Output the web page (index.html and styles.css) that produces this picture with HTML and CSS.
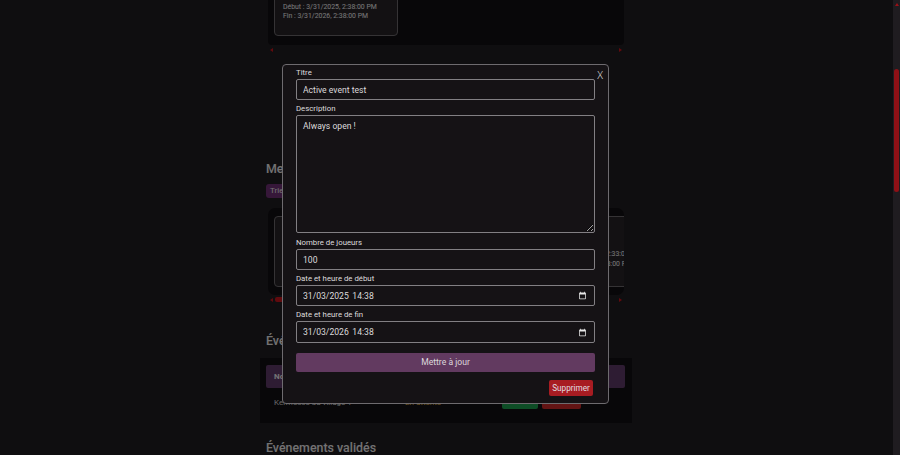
FILE: index.html
```html
<!DOCTYPE html>
<html lang="fr">
<head>
<meta charset="utf-8">
<title>Événements</title>
<link rel="stylesheet" href="styles.css">
</head>
<body>
<div class="page">
  <main class="content">
    <section class="carousel first">
      <div class="event-card">
        <p class="muted">Joueurs : 100</p>
        <p>Début : 3/31/2025, 2:38:00 PM</p>
        <p>Fin : 3/31/2026, 2:38:00 PM</p>
      </div>
    </section>
    <div class="scroller">
      <span class="arrow-left"></span>
      <span class="arrow-right"></span>
    </div>

    <h2 class="heading mod">Mes événements</h2>
    <span class="tag">Trier</span>
    <section class="carousel second">
      <div class="event-card tall">
        <p>Joueurs : 100</p>
        <p>Début : 3/31/2025, 2:33:00 PM</p>
        <p>Fin : 3/31/2026, 2:33:00 PM</p>
      </div>
      <div class="event-card tall">
        <p>Joueurs : 100</p>
        <p>Début : 3/31/2025, 2:33:00 PM</p>
        <p>Fin : 3/31/2026, 2:33:00 PM</p>
      </div>
      <div class="event-card tall">
        <p>Début : 3/31/2025, 2:33:00 PM</p>
        <p>Fin : 3/31/2026, 2:33:00 PM</p>
      </div>
    </section>
    <div class="scroller">
      <span class="arrow-left"></span>
      <span class="thumb"></span>
      <span class="arrow-right"></span>
    </div>

    <h2 class="heading ev">Événements en attente</h2>
    <section class="table-wrap">
      <div class="table-head"><span>Nom</span></div>
      <div class="table-row">
        <span class="col-name">Kermesse du village 1</span>
        <span class="col-status">En attente</span>
        <span class="col-actions">
          <span class="pill green">Valider</span>
          <span class="pill red">Refuser</span>
        </span>
      </div>
    </section>

    <h2 class="heading val">Événements validés</h2>
  </main>
  <aside class="scrollbar">
    <span class="scroll-up"></span>
    <span class="scroll-thumb"></span>
  </aside>
</div>

<div class="overlay">
  <form class="modal">
    <button type="button" class="close">X</button>
    <label class="field-label first-label" for="titre">Titre</label>
    <input class="field" id="titre" type="text" value="Active event test">
    <label class="field-label tight" for="desc">Description</label>
    <textarea class="field area" id="desc">Always open !</textarea>
    <label class="field-label" for="nb">Nombre de joueurs</label>
    <input class="field" id="nb" type="text" value="100">
    <label class="field-label tight" for="debut">Date et heure de début</label>
    <div class="date-field">
      <input class="date-text" id="debut" type="text" value="31/03/2025 14:38">
      <svg class="cal" viewBox="0 0 24 24" width="9" height="9"><path fill="#e8e8e8" d="M19 4h-1V2h-2v2H8V2H6v2H5a2 2 0 0 0-2 2v14a2 2 0 0 0 2 2h14a2 2 0 0 0 2-2V6a2 2 0 0 0-2-2zm0 16H5V9h14z"/></svg>
    </div>
    <label class="field-label tight" for="fin">Date et heure de fin</label>
    <div class="date-field">
      <input class="date-text" id="fin" type="text" value="31/03/2026 14:38">
      <svg class="cal" viewBox="0 0 24 24" width="9" height="9"><path fill="#e8e8e8" d="M19 4h-1V2h-2v2H8V2H6v2H5a2 2 0 0 0-2 2v14a2 2 0 0 0 2 2h14a2 2 0 0 0 2-2V6a2 2 0 0 0-2-2zm0 16H5V9h14z"/></svg>
    </div>
    <button type="button" class="submit">Mettre à jour</button>
    <div class="danger-row"><button type="button" class="delete">Supprimer</button></div>
  </form>
</div>
</body>
</html>
```
FILE: styles.css
```css
* { box-sizing: border-box; }
html, body { margin: 0; height: 100%; overflow: hidden; }
body {
  background: #1f1c20;
  font-family: Roboto, "Noto Sans", sans-serif;
  color: #e8e6e8;
}
p { margin: 0; }

.page { display: flex; height: 455px; overflow: hidden; }
.content {
  flex: 1;
  padding: 0 268px 0 266px;
  margin-top: -8px;
  min-width: 0;
}
.scrollbar {
  width: 7px;
  background: #1f1c20;
  padding-top: 3px;
  display: flex;
  flex-direction: column;
  align-items: center;
}
.scroll-up {
  width: 0; height: 0;
  border-left: 2.5px solid transparent;
  border-right: 2.5px solid transparent;
  border-bottom: 3px solid #9a1017;
}
.scroll-thumb {
  width: 5px;
  height: 123px;
  margin-top: 63px;
  background: #8f1016;
  border-radius: 3px;
}

.carousel {
  background: #100e12;
  margin: 0 1px 0 2px;
  padding: 8px 6px;
  display: flex;
  gap: 8px;
  overflow: hidden;
  border-radius: 4px;
}
.carousel.first { height: 53px; padding-top: 0; }
.carousel.second { height: 87px; margin-top: 10px; border-radius: 7px; }
.event-card {
  width: 124px;
  flex: none;
  border: 1px solid #6a676b;
  border-radius: 4px;
  background: #262327;
  padding: 0 8px;
  font-size: 6.9px;
  line-height: 9.6px;
  color: #f0eef0;
  white-space: nowrap;
}
.carousel.first .event-card { height: 44px; }
.event-card.tall { height: 71px; padding-top: 33px; }
.muted { color: #8a868b; }

.scroller {
  height: 9px;
  margin: 0 1px 0 2px;
  display: flex;
  align-items: center;
  justify-content: space-between;
  padding: 0 2px;
}
.arrow-left, .arrow-right {
  width: 0; height: 0;
  border-top: 2.5px solid transparent;
  border-bottom: 2.5px solid transparent;
}
.arrow-left { border-right: 3px solid #c2141c; }
.arrow-right { border-left: 3px solid #c2141c; }
.thumb {
  width: 18px; height: 5px;
  margin-left: 2px; margin-right: auto;
  background: #c2141c; border-radius: 2px;
}

.heading {
  margin: 0;
  font-size: 12.4px;
  font-weight: 500;
  line-height: 15px;
  color: #e6e4e6;
  white-space: nowrap;
}
.heading.mod { margin-top: 107px; }
.heading.ev { margin-top: 29px; }
.heading.val { margin-top: 17px; }

.tag {
  display: inline-block;
  margin-top: 8px;
  height: 14px;
  padding: 0 16px 0 4px;
  border-radius: 3px;
  background: #6c2f73;
  font-size: 8px;
  line-height: 14px;
  vertical-align: top;
}

.table-wrap {
  margin: 10px -7px 0 -6px;
  padding: 7px 7px 7px 6px;
  height: 65px;
  background: #100e12;
}
.table-head {
  height: 23px;
  background: #5d3866;
  padding: 0 8px;
  font-size: 8px;
  font-weight: 700;
  line-height: 23px;
  border-radius: 2px;
}
.table-row {
  display: flex;
  align-items: center;
  height: 28px;
  padding: 0 8px;
  font-size: 8px;
}
.col-name { width: 131px; color: #ccc; }
.col-status { width: 97px; color: #d9a441; }
.col-actions { display: flex; gap: 4px; }
.pill {
  height: 14px;
  padding: 0 6px;
  line-height: 14px;
  border-radius: 2px;
  color: #fff;
  text-align: center;
}
.pill.green { background: #1c9a4c; width: 36px; }
.pill.red { background: #c62828; width: 39px; }

.overlay {
  position: fixed;
  inset: 0 7px 0 0;
  background: rgba(0, 0, 0, 0.5);
}
.modal {
  position: absolute;
  left: 282px;
  top: 63.5px;
  width: 327px;
  height: 340px;
  padding: 3px 13px 0;
  background: #151215;
  border: 1px solid #6e6b6f;
  border-radius: 4px;
  display: flex;
  flex-direction: column;
}
.close {
  position: absolute;
  top: 4px;
  right: 5px;
  padding: 0;
  background: none;
  border: 0;
  color: #dedcde;
  font: 300 10.5px/12px "Noto Sans", sans-serif;
}
.field-label {
  font-size: 7.8px;
  line-height: 9px;
  height: 11px;
  margin-top: 5px;
  color: #dedcde;
  font-weight: 400;
}
.field-label.tight { margin-top: 4px; }
.first-label { margin-top: 0; }
.field, .date-text {
  font-family: Roboto, sans-serif;
  font-size: 8.6px;
  color: #dcdadc;
}
.field {
  display: block;
  width: 100%;
  flex: none;
  height: 21px;
  padding: 1px 6px 0;
  background: #151215;
  border: 1px solid #827f83;
  border-radius: 2px;
  outline: 0;
}
.area {
  height: 118px;
  padding: 5px 6px;
  line-height: 11px;
  resize: vertical;
  color-scheme: dark;
}
.date-field {
  display: flex;
  flex: none;
  align-items: center;
  justify-content: space-between;
  height: 21.5px;
  padding: 1px 7px 0 6px;
  background: #151215;
  border: 1px solid #827f83;
  border-radius: 2px;
}
.date-text {
  flex: 1;
  min-width: 0;
  padding: 0;
  background: none;
  border: 0;
  outline: 0;
  word-spacing: 1.5px;
}
.cal { display: block; flex: none; }
.submit {
  margin-top: 10px;
  flex: none;
  height: 19px;
  padding: 0;
  border: 0;
  border-radius: 2px;
  background: #623a60;
  color: #dcd8dc;
  font: 8.6px/19px Roboto, sans-serif;
}
.danger-row { display: flex; justify-content: flex-end; margin-top: 8px; padding-right: 2px; }
.delete {
  height: 16px;
  width: 44px;
  padding: 0;
  border: 0;
  border-radius: 2px;
  background: #a81c22;
  color: #e0dee0;
  font: 8.2px/16px Roboto, sans-serif;
}
```
